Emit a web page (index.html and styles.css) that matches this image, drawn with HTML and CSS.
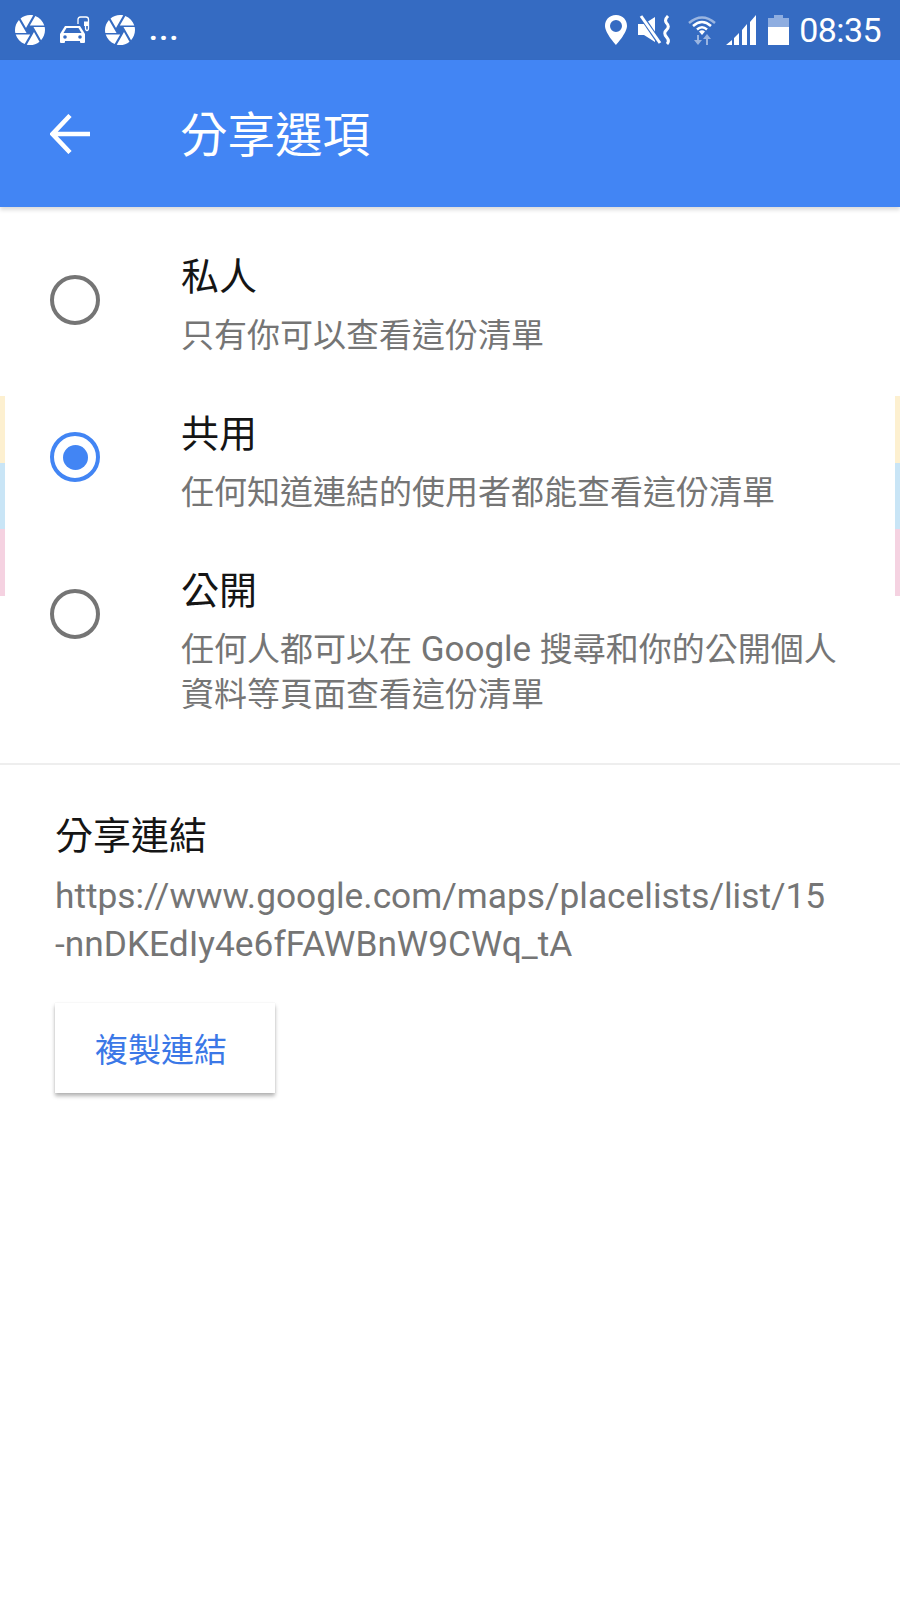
FILE: index.html
```
<!DOCTYPE html>
<html lang="zh-Hant">
<head>
<meta charset="utf-8">
<title>分享選項</title>
<link rel="stylesheet" href="styles.css">
</head>
<body>
<svg class="defs" width="0" height="0" aria-hidden="true">
  <symbol id="shutter" viewBox="2 2 20 20">
    <path fill="#fff" d="M9.4 10.5l4.77-8.26C13.47 2.09 12.75 2 12 2c-2.4 0-4.6.85-6.32 2.25l3.66 6.35.06-.1zM21.54 9c-.92-2.92-3.15-5.26-6-6.34L11.88 9h9.66zm.26 1h-7.49l.29.5 4.76 8.25C21 16.97 22 14.61 22 12c0-.69-.07-1.35-.2-2zM8.54 12l-3.9-6.75C3.01 7.03 2 9.39 2 12c0 .69.07 1.35.2 2h7.49l-1.15-2zm-6.08 3c.92 2.92 3.15 5.26 6 6.34L12.12 15H2.46zm11.27 0l-3.9 6.76c.7.15 1.42.24 2.17.24 2.4 0 4.6-.85 6.32-2.25l-3.66-6.35-.93 1.6z"/>
  </symbol>
</svg>
<header class="status">
  <div class="status-left">
    <svg class="ic-shutter"><use href="#shutter"/></svg>
    <svg class="ic-car" viewBox="0 0 30 30">
      <path d="M5 11 H20 L25 19 V27 Q25 28 24 28 H21 Q20 28 20 27 V26 H5 V27 Q5 28 4 28 H1 Q0 28 0 27 V19Z" fill="#fff"/>
      <path d="M6.500 13 H18.500 L21.500 18 H3.500Z" fill="#356bc2"/>
      <circle cx="5" cy="22" r="1.800" fill="#356bc2"/>
      <circle cx="20" cy="22" r="1.800" fill="#356bc2"/>
      <path d="M18 9 V4.500 Q18 2 20.500 2 H26 Q28.500 2 28.500 4.500 V13 Q28.500 15.500 27 15.500 Q25.500 15.500 25.500 13 V10" fill="none" stroke="#fff" stroke-width="1.300"/>
      <rect x="24" y="6.500" width="4.500" height="4.500" fill="#fff"/>
    </svg>
    <svg class="ic-shutter"><use href="#shutter"/></svg>
    <span class="dots">...</span>
  </div>
  <div class="status-right">
    <svg class="ic-pin" viewBox="0 0 24 30">
      <path fill-rule="evenodd" d="M12 0 C5 0 1 5 1 11 C1 18 12 30 12 30 C12 30 23 18 23 11 C23 5 19 0 12 0Z M12 5 A6 6 0 1 1 12 17 A6 6 0 1 1 12 5Z" fill="#fff"/>
    </svg>
    <svg class="ic-mute" viewBox="0 0 34 30">
      <path d="M0 9 H6 L17 2 V27 L6 20 H0Z" fill="#fff"/>
      <path d="M2 -1 L23 30" stroke="#356bc2" stroke-width="5"/>
      <path d="M3 1 L22 28" stroke="#fff" stroke-width="3"/>
      <path d="M30 1 Q26 5 28.500 8 Q32 11.500 28.500 15 Q25 18 28.500 22 Q32 26 29 29" fill="none" stroke="#fff" stroke-width="3"/>
    </svg>
    <svg class="ic-wifi" viewBox="0 0 28 30">
      <path d="M1 8 Q14 -3 27 8" fill="none" stroke="#9ab5e1" stroke-width="2.500"/>
      <path d="M5 11 Q14 3 23 11" fill="none" stroke="#fff" stroke-width="2.500"/>
      <path d="M9 14.500 Q14 10 19 14.500" fill="none" stroke="#fff" stroke-width="2.500"/>
      <path d="M14 20 L11 16.500 Q14 14 17 16.500Z" fill="#fff"/>
      <path d="M9 20 H11 V25 H14 L10 30 L6 25 H9Z" fill="#9ab5e1"/>
      <path d="M18 30 H20 V24 H23 L19 19 L15 24 H18Z" fill="#9ab5e1"/>
    </svg>
    <svg class="ic-signal" viewBox="0 0 30 30">
      <path d="M0 30 L6 25 V30Z M8 23 L13 18 V30 H8Z M16 15 L21 9 V30 H16Z M24 7 L30 0 V30 H24Z" fill="#fff"/>
    </svg>
    <svg class="ic-battery" viewBox="0 0 21 30">
      <path d="M6 0 H15 V3 H21 V12 H0 V3 H6Z" fill="#8eade0"/>
      <rect x="0" y="12" width="21" height="18" fill="#fff"/>
    </svg>
    <span class="clock">08:35</span>
  </div>
</header>
<nav class="appbar">
  <svg class="back" viewBox="0 0 40 40">
    <path d="M40 20 H3 M20 1.500 L2.500 20 L20 38.500" fill="none" stroke="#fff" stroke-width="4.500"/>
  </svg>
  <h1 class="appbar-title">分享選項</h1>
</nav>
<main class="content">
  <i class="swatch swatch-left"><b class="s-y"></b><b class="s-b"></b><b class="s-p"></b></i>
  <i class="swatch swatch-right"><b class="s-y"></b><b class="s-b"></b><b class="s-p"></b></i>
  <section class="options">
    <div class="option">
      <span class="radio"></span>
      <div class="option-text">
        <div class="option-title">私人</div>
        <div class="option-sub">只有你可以查看這份清單</div>
      </div>
    </div>
    <div class="option">
      <span class="radio radio-on"></span>
      <div class="option-text">
        <div class="option-title">共用</div>
        <div class="option-sub">任何知道連結的使用者都能查看這份清單</div>
      </div>
    </div>
    <div class="option">
      <span class="radio"></span>
      <div class="option-text">
        <div class="option-title">公開</div>
        <div class="option-sub">任何人都可以在<span class="latin"> Google </span>搜尋和你的公開個人<br>資料等頁面查看這份清單</div>
      </div>
    </div>
  </section>
  <section class="share">
    <div class="option-title">分享連結</div>
    <div class="share-url">https://www.google.com/maps/placelists/list/15<br>-nnDKEdIy4e6fFAWBnW9CWq_tA</div>
    <button class="copy" type="button">複製連結</button>
  </section>
</main>
</body>
</html>
```
FILE: styles.css
```
* { box-sizing: border-box; }
html, body { margin: 0; padding: 0; }
body {
  width: 900px;
  height: 1600px;
  background: #fff;
  overflow: hidden;
  font-family: Roboto, "Noto Sans CJK TC", sans-serif;
}
.defs { position: absolute; }
.status {
  height: 60px;
  background: #356bc2;
  display: flex;
  justify-content: space-between;
  align-items: center;
  padding: 0 19px 0 15px;
}
.status-left, .status-right { display: flex; align-items: center; }
.ic-shutter { width: 30px; height: 30px; margin-right: 15px; }
.ic-car { width: 30px; height: 30px; margin-right: 15px; }
.dots { color: #fff; font-size: 30px; font-weight: 700; line-height: 30px; letter-spacing: 1.500px; margin-left: -1px; }
.ic-pin { width: 24px; height: 30px; margin-right: 10px; }
.ic-mute { width: 34px; height: 30px; margin-right: 16px; }
.ic-wifi { width: 28px; height: 30px; margin-right: 10px; }
.ic-signal { width: 30px; height: 30px; margin-right: 12px; }
.ic-battery { width: 21px; height: 30px; margin-right: 10px; }
.clock { color: #fff; font-size: 34px; line-height: 40px; letter-spacing: -.6px; }
.appbar {
  height: 147px;
  background: #4285f4;
  box-shadow: 0 3px 4px rgba(0, 0, 0, .14);
  display: flex;
  align-items: center;
  padding-left: 50px;
  position: relative;
}
.back { width: 40px; height: 40px; margin-right: 90px; }
.appbar-title {
  margin: 0;
  padding-top: 4px;
  color: #fff;
  font-size: 47.500px;
  font-weight: 400;
  line-height: 60px;
}
.content { position: relative; }
.swatch {
  position: absolute;
  top: 189px;
  width: 5px;
  display: flex;
  flex-direction: column;
}
.swatch-left { left: 0; }
.swatch-right { right: 0; }
.swatch b { display: block; height: 66.500px; }
.s-y { background: #fdf0d0; }
.s-b { background: #c9e5f6; }
.s-p { background: #f5d2e1; }
.options {
  padding: 45px 0 46px;
  border-bottom: 2px solid #eee;
  display: flex;
  flex-direction: column;
  gap: 51px;
}
.option { display: flex; align-items: flex-start; padding-left: 50px; }
.radio {
  flex: none;
  width: 50px;
  height: 50px;
  border: 4.500px solid #757575;
  border-radius: 50%;
  margin: 23px 81px 0 0;
  display: flex;
  align-items: center;
  justify-content: center;
}
.radio-on { border-color: #4285f4; }
.radio-on::after {
  content: "";
  width: 25px;
  height: 25px;
  border-radius: 50%;
  background: #4285f4;
}
.option-title {
  font-size: 38px;
  line-height: 50px;
  color: #151515;
}
.option-sub {
  font-size: 33px;
  line-height: 45px;
  color: #757575;
  margin-top: 11px;
}
.latin { font-size: 35px; }
.share { padding: 46px 0 0 55px; }
.share-url {
  font-size: 35.300px;
  line-height: 48px;
  color: #757575;
  margin-top: 11px;
}
.copy {
  display: block;
  width: 220px;
  height: 90px;
  margin-top: 35px;
  border: 0;
  background: #fff;
  color: #3b78e7;
  font: inherit;
  font-size: 33px;
  padding: 0 8px 0 0;
  text-align: center;
  box-shadow: 0 3px 4px rgba(0, 0, 0, .3), 0 0 1px rgba(0, 0, 0, .1);
}
```
